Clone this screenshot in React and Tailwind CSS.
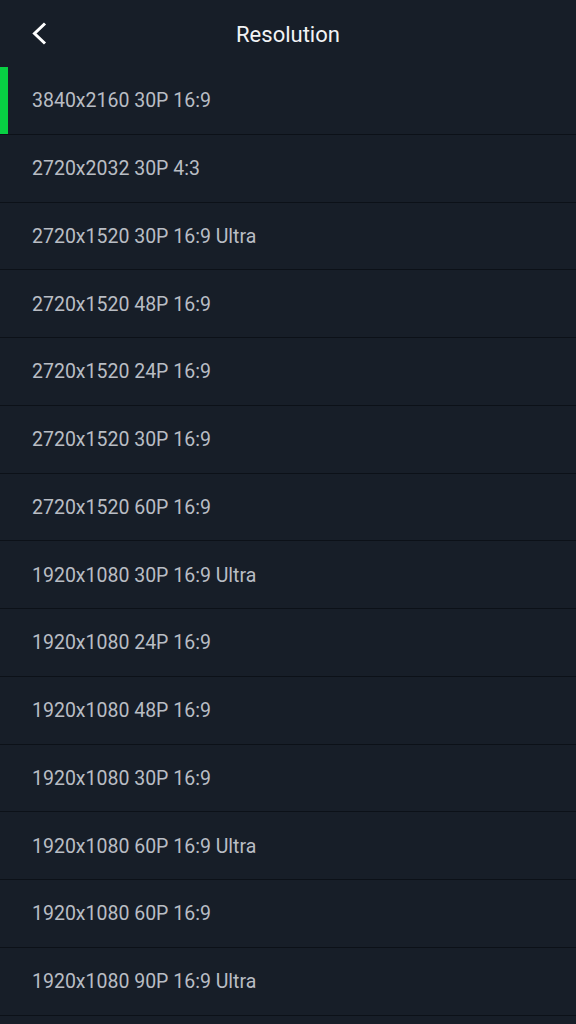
import React from "react";

const items = [
  "3840x2160 30P 16:9",
  "2720x2032 30P 4:3",
  "2720x1520 30P 16:9 Ultra",
  "2720x1520 48P 16:9",
  "2720x1520 24P 16:9",
  "2720x1520 30P 16:9",
  "2720x1520 60P 16:9",
  "1920x1080 30P 16:9 Ultra",
  "1920x1080 24P 16:9",
  "1920x1080 48P 16:9",
  "1920x1080 30P 16:9",
  "1920x1080 60P 16:9 Ultra",
  "1920x1080 60P 16:9",
  "1920x1080 90P 16:9 Ultra",
];

const App = () => {
  const selected = 0;

  return (
    <div
      className="w-[576px] h-[1024px] overflow-hidden bg-[#171e28]"
      style={{ fontFamily: "Roboto, 'Liberation Sans', sans-serif" }}
    >
      {/* header */}
      <div className="relative flex items-center justify-center h-[67px] pt-[2px]">
        <button className="absolute left-[28px] top-[21px]">
          <svg width="24" height="24" viewBox="0 0 24 24" fill="none">
            <path
              d="M17 2.5 L6.5 12.5 L17 22.5"
              stroke="#ffffff"
              strokeWidth="3"
              strokeLinecap="butt"
              strokeLinejoin="miter"
            />
          </svg>
        </button>
        <span className="text-[22px] text-[#f2f3f5]">Resolution</span>
      </div>

      {/* list */}
      <ul>
        {items.map((label, i) => (
          <li
            key={label}
            className="relative flex items-center h-[67.77px] border-b border-[#0c1118] pl-[32px] pt-[1px]"
          >
            {i === selected && (
              <span className="absolute left-0 top-0 bottom-0 w-[8px] bg-[#08d043]" />
            )}
            <span className="text-[19.5px] text-[#b9bdc4]">{label}</span>
          </li>
        ))}
      </ul>
    </div>
  );
};

export default App;
